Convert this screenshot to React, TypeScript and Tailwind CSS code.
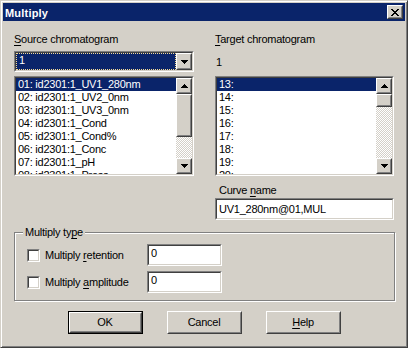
import React from "react";

const F = "font-['Liberation_Sans',Arial,sans-serif]";

function U({ children }: { children: React.ReactNode }) {
  return <span className="underline underline-offset-[2px] decoration-1">{children}</span>;
}

function Raised({ className = "", children }: { className?: string; children?: React.ReactNode }) {
  return (
    <div className={`border border-t-white border-l-white border-r-[#404040] border-b-[#404040] bg-[#d4d0c8] ${className}`}>
      <div className="w-full h-full border border-t-[#d4d0c8] border-l-[#d4d0c8] border-r-[#808080] border-b-[#808080] flex items-center justify-center">
        {children}
      </div>
    </div>
  );
}

function Sunken({ className = "", innerClass = "", children }: { className?: string; innerClass?: string; children?: React.ReactNode }) {
  return (
    <div className={`border border-t-[#808080] border-l-[#808080] border-r-white border-b-white ${className}`}>
      <div className={`w-full h-full border border-t-[#404040] border-l-[#404040] border-r-[#d4d0c8] border-b-[#d4d0c8] bg-white ${innerClass}`}>
        {children}
      </div>
    </div>
  );
}

function ArrowUp() {
  return (
    <svg width="7" height="4" shapeRendering="crispEdges" className="block">
      <path d="M3 0h1v1H3z M2 1h3v1H2z M1 2h5v1H1z M0 3h7v1H0z" fill="#000" />
    </svg>
  );
}

function ArrowDown() {
  return (
    <svg width="7" height="4" shapeRendering="crispEdges" className="block">
      <path d="M0 0h7v1H0z M1 1h5v1H1z M2 2h3v1H2z M3 3h1v1H3z" fill="#000" />
    </svg>
  );
}

function CloseX() {
  return (
    <svg width="8" height="7" shapeRendering="crispEdges" className="block">
      <path
        d="M0 0h2v1H0z M6 0h2v1H6z M1 1h2v1H1z M5 1h2v1H5z M2 2h4v1H2z M3 3h2v1H3z M2 4h4v1H2z M1 5h2v1H1z M5 5h2v1H5z M0 6h2v1H0z M6 6h2v1H6z"
        fill="#000"
      />
    </svg>
  );
}

function ScrollBar({ thumb }: { thumb: number }) {
  return (
    <div className="w-[16px] flex flex-col h-full">
      <Raised className="h-[16px] w-[16px] shrink-0">
        <ArrowUp />
      </Raised>
      <Raised className="w-[16px] shrink-0" >
        <div style={{ height: thumb - 4 }} />
      </Raised>
      <div className="flex-1 [background:repeating-conic-gradient(#ffffff_0%_25%,#d4d0c8_0%_50%)_0_0/2px_2px]" />
      <Raised className="h-[16px] w-[16px] shrink-0">
        <ArrowDown />
      </Raised>
    </div>
  );
}

function ListBox({ items, width, thumb }: { items: string[]; width: string; thumb: number }) {
  return (
    <Sunken className={`${width} h-[100px] mt-[4px]`} innerClass="flex overflow-hidden">
      <div className="flex-1 flex flex-col overflow-hidden">
        {items.map((it, i) => (
          <div
            key={i}
            className={`h-[13px] shrink-0 pl-[2px] whitespace-nowrap ${i === 0 ? "bg-[#0a246a] text-white" : "text-black"}`}
          >
            {it}
          </div>
        ))}
      </div>
      <ScrollBar thumb={thumb} />
    </Sunken>
  );
}

function Checkbox() {
  return (
    <div className="w-[13px] h-[13px] border border-t-[#808080] border-l-[#808080] border-r-white border-b-white shrink-0">
      <div className="w-full h-full border border-t-[#404040] border-l-[#404040] border-r-[#d4d0c8] border-b-[#d4d0c8] bg-white" />
    </div>
  );
}

function Button({ children, def = false }: { children: React.ReactNode; def?: boolean }) {
  const inner = (
    <div className="w-full h-full border border-t-white border-l-white border-r-[#404040] border-b-[#404040]">
      <div className="w-full h-full border border-t-[#d4d0c8] border-l-[#d4d0c8] border-r-[#808080] border-b-[#808080] flex items-center justify-center">
        {children}
      </div>
    </div>
  );
  return (
    <div className={`w-[75px] h-[23px] ${def ? "border border-black" : ""}`}>{inner}</div>
  );
}

export default function App() {
  const src = [
    "01: id2301:1_UV1_280nm",
    "02: id2301:1_UV2_0nm",
    "03: id2301:1_UV3_0nm",
    "04: id2301:1_Cond",
    "05: id2301:1_Cond%",
    "06: id2301:1_Conc",
    "07: id2301:1_pH",
    "08: id2301:1_Press",
  ];
  const tgt = ["13:", "14:", "15:", "16:", "17:", "18:", "19:", "20:"];
  return (
    <div
      className={`${F} w-[408px] h-[348px] bg-[#d4d0c8] border border-t-[#d4d0c8] border-l-[#d4d0c8] border-r-[#404040] border-b-[#404040] shadow-[inset_1px_1px_0_#ffffff,inset_-1px_-1px_0_#808080] p-[2px] flex flex-col text-[11px] leading-[13px] tracking-[-0.25px] text-black`}
    >
      {/* Title bar */}
      <div className="h-[18px] bg-[#0a246a] flex shrink-0">
        <div className="flex-1 pl-[2px] pt-[4px] font-bold text-white tracking-[0.2px]">Multiply</div>
        <Raised className="w-[16px] h-[14px] mt-[2px] mr-[2px]">
          <CloseX />
        </Raised>
      </div>

      {/* Body */}
      <div className="flex flex-col pt-[12px] px-[11px]">
        <div className="flex gap-[21px]">
          {/* Left column */}
          <div className="w-[180px] flex flex-col">
            <div className="h-[13px] whitespace-nowrap">
              <U>S</U>ource chromatogram
            </div>
            <Sunken className="w-[180px] h-[21px] mt-[5px]" innerClass="flex">
              <div className="flex-1 bg-[#0a246a] border border-dotted border-[#f5db95] text-white pl-[2px] leading-[13px]">
                1
              </div>
              <Raised className="w-[16px] h-full shrink-0">
                <ArrowDown />
              </Raised>
            </Sunken>
            <ListBox items={src} width="w-[180px]" thumb={43} />
          </div>

          {/* Right column */}
          <div className="w-[179px] flex flex-col">
            <div className="h-[13px] whitespace-nowrap">
              <U>T</U>arget chromatogram
            </div>
            <div className="h-[21px] mt-[5px] pt-[5px] pl-[1px]">1</div>
            <ListBox items={tgt} width="w-[179px]" thumb={13} />
            <div className="h-[13px] mt-[8px] pl-[4px] whitespace-nowrap">
              Curve <U>n</U>ame
            </div>
            <Sunken className="w-[179px] h-[22px] mt-[1px]" innerClass="flex items-center pl-[2px]">
              <span>UV1_280nm@01,MUL</span>
            </Sunken>
          </div>
        </div>

        {/* Group box */}
        <div className="relative mt-[12px] w-[381px] h-[69px] border border-[#808080] shadow-[inset_1px_1px_0_#ffffff,1px_1px_0_#ffffff] pt-[11px] pl-[12px] flex flex-col gap-[5px]">
          <span className="absolute top-[-7px] left-[8px] px-[2px] bg-[#d4d0c8] whitespace-nowrap">
            Multiply ty<U>p</U>e
          </span>
          <div className="flex items-center h-[22px]">
            <div className="w-[120px] flex items-center gap-[5px]">
              <Checkbox />
              <span className="whitespace-nowrap">
                Multiply <U>r</U>etention
              </span>
            </div>
            <Sunken className="w-[75px] h-[22px]" innerClass="pl-[2px] pt-[1px]">
              0
            </Sunken>
          </div>
          <div className="flex items-center h-[22px]">
            <div className="w-[120px] flex items-center gap-[5px]">
              <Checkbox />
              <span className="whitespace-nowrap">
                Multiply <U>a</U>mplitude
              </span>
            </div>
            <Sunken className="w-[75px] h-[22px]" innerClass="pl-[2px] pt-[1px]">
              0
            </Sunken>
          </div>
        </div>

        {/* Buttons */}
        <div className="flex justify-center gap-[24px] mt-[10px]">
          <Button def>OK</Button>
          <Button>Cancel</Button>
          <Button>
            <span>
              <U>H</U>elp
            </span>
          </Button>
        </div>
      </div>
    </div>
  );
}
